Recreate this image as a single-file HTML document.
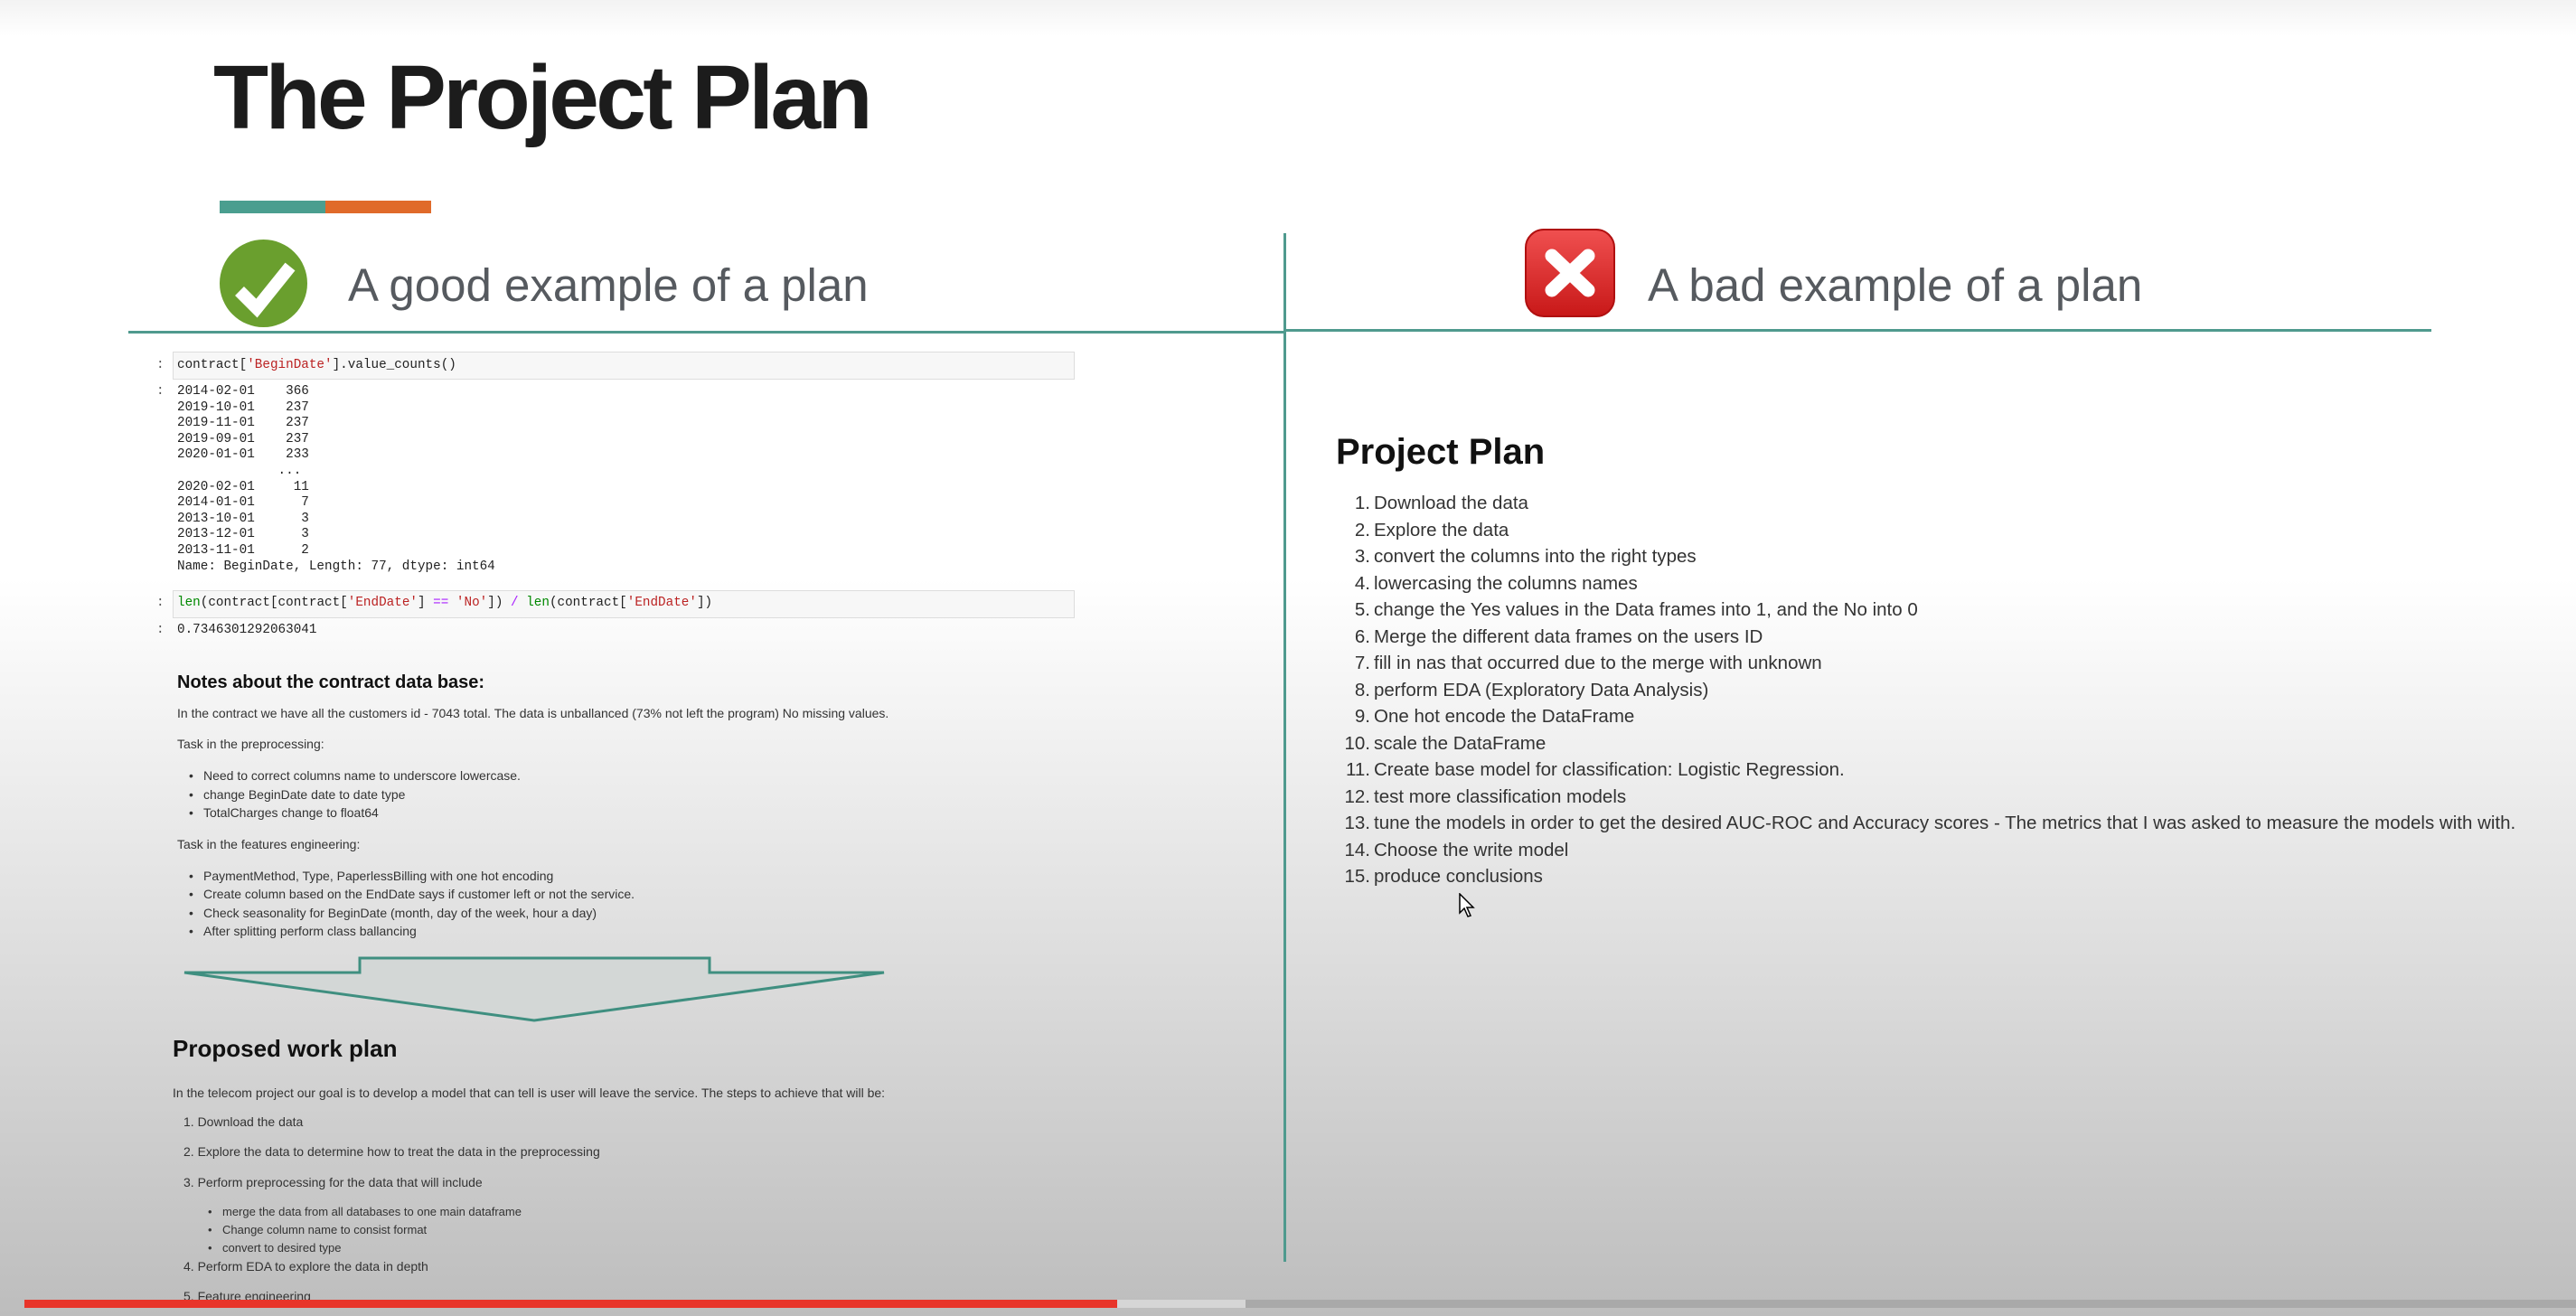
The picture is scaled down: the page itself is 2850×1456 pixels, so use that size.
<!DOCTYPE html>
<html><head><meta charset="utf-8"><style>
*{margin:0;padding:0;box-sizing:border-box}
body{width:2850px;height:1456px;overflow:hidden;position:relative;font-family:"Liberation Sans",sans-serif;
background:linear-gradient(#f3f3f3 0px,#fff 40px,#fff 640px,#e2e2e2 1000px,#bdbdbd 1456px);}
.a{position:absolute;white-space:nowrap}
.m{font-family:"Liberation Mono",monospace;font-size:14.3px;color:#222;line-height:17.6px}
.s{font-size:14px;color:#333}
.r{color:#b22}
.g{color:#080}
.p{color:#a2f}
.li{position:absolute;left:1478px;width:38px;text-align:right;font-size:20.5px;color:#333}
.lt{position:absolute;left:1520px;font-size:20.5px;color:#333;white-space:nowrap}
.b::before{content:"•";position:absolute;left:-16px}
</style></head><body>
<div class="a" style="left:236px;top:48px;font-size:100px;font-weight:bold;letter-spacing:-3.6px;color:#1c1c1c;line-height:120px">The Project Plan</div>
<div class="a" style="left:243px;top:222px;width:117px;height:14px;background:#4a9e8f"></div>
<div class="a" style="left:360px;top:222px;width:117px;height:14px;background:#e06a2a"></div>

<div class="a" style="left:1420px;top:258px;width:3px;height:1138px;background:#4f9a8e"></div>
<div class="a" style="left:142px;top:366px;width:1280px;height:3px;background:#4f9a8e"></div>
<div class="a" style="left:1421px;top:364px;width:1269px;height:3px;background:#4f9a8e"></div>

<svg class="a" style="left:243px;top:265px" width="97" height="97" viewBox="0 0 97 97"><circle cx="48.5" cy="48.5" r="48.5" fill="#6a9f2e"/><path d="M22 57 L41 76 L78 30" stroke="#fff" stroke-width="14" fill="none" stroke-linejoin="miter"/></svg>
<div class="a" style="left:385px;top:286px;font-size:51px;color:#565a5f;line-height:60px">A good example of a plan</div>

<svg class="a" style="left:1687px;top:253px" width="100" height="98" viewBox="0 0 100 98"><defs><linearGradient id="rg" x1="0" y1="0" x2="0" y2="1"><stop offset="0" stop-color="#f05050"/><stop offset="1" stop-color="#c81818"/></linearGradient></defs><rect x="1" y="1" width="98" height="96" rx="20" fill="url(#rg)" stroke="#b01010" stroke-width="2"/><path d="M30 30 L70 68 M70 30 L30 68" stroke="#fff" stroke-width="15" stroke-linecap="round"/></svg>
<div class="a" style="left:1823px;top:286px;font-size:51px;color:#565a5f;line-height:60px">A bad example of a plan</div>

<!-- left notebook -->
<div class="a" style="left:191px;top:389px;width:998px;height:31px;background:#f7f7f7;border:1px solid #ddd"></div>
<div class="a m" style="left:173px;top:396px;color:#555">:</div>
<div class="a m" style="left:196px;top:396px">contract[<span class="r">'BeginDate'</span>].value_counts()</div>
<div class="a m" style="left:173px;top:425px;color:#555">:</div>
<pre class="m" style="position:absolute;left:196px;top:425px;white-space:pre">2014-02-01    366
2019-10-01    237
2019-11-01    237
2019-09-01    237
2020-01-01    233
             ...
2020-02-01     11
2014-01-01      7
2013-10-01      3
2013-12-01      3
2013-11-01      2
Name: BeginDate, Length: 77, dtype: int64</pre>
<div class="a" style="left:191px;top:653px;width:998px;height:31px;background:#f7f7f7;border:1px solid #ddd"></div>
<div class="a m" style="left:173px;top:659px;color:#555">:</div>
<div class="a m" style="left:196px;top:659px"><span class="g">len</span>(contract[contract[<span class="r">'EndDate'</span>] <span class="p">==</span> <span class="r">'No'</span>]) <span class="p">/</span> <span class="g">len</span>(contract[<span class="r">'EndDate'</span>])</div>
<div class="a m" style="left:173px;top:689px;color:#555">:</div>
<div class="a m" style="left:196px;top:689px">0.7346301292063041</div>

<div class="a" style="left:196px;top:744px;font-size:20px;font-weight:bold;color:#111">Notes about the contract data base:</div>
<div class="a s" style="left:196px;top:781px">In the contract we have all the customers id - 7043 total. The data is unballanced (73% not left the program) No missing values.</div>
<div class="a s" style="left:196px;top:815px">Task in the preprocessing:</div>
<div class="a s b" style="left:225px;top:850px">Need to correct columns name to underscore lowercase.</div>
<div class="a s b" style="left:225px;top:871px">change BeginDate date to date type</div>
<div class="a s b" style="left:225px;top:891px">TotalCharges change to float64</div>
<div class="a s" style="left:196px;top:926px">Task in the features engineering:</div>
<div class="a s b" style="left:225px;top:961px">PaymentMethod, Type, PaperlessBilling with one hot encoding</div>
<div class="a s b" style="left:225px;top:981px">Create column based on the EndDate says if customer left or not the service.</div>
<div class="a s b" style="left:225px;top:1002px">Check seasonality for BeginDate (month, day of the week, hour a day)</div>
<div class="a s b" style="left:225px;top:1022px">After splitting perform class ballancing</div>

<svg class="a" style="left:0;top:0" width="1100" height="1200"><polygon points="398,1060 785,1060 785,1076 978,1076 591,1129 204,1076 398,1076" fill="#d3d7d6" stroke="#3f8f80" stroke-width="3"/></svg>

<div class="a" style="left:191px;top:1145px;font-size:26px;font-weight:bold;color:#111">Proposed work plan</div>
<div class="a s" style="left:191px;top:1201px">In the telecom project our goal is to develop a model that can tell is user will leave the service. The steps to achieve that will be:</div>
<div class="a s" style="left:203px;top:1233px">1. Download the data</div>
<div class="a s" style="left:203px;top:1266px">2. Explore the data to determine how to treat the data in the preprocessing</div>
<div class="a s" style="left:203px;top:1300px">3. Perform preprocessing for the data that will include</div>
<div class="a s b" style="left:246px;top:1333px;font-size:13px">merge the data from all databases to one main dataframe</div>
<div class="a s b" style="left:246px;top:1353px;font-size:13px">Change column name to consist format</div>
<div class="a s b" style="left:246px;top:1373px;font-size:13px">convert to desired type</div>
<div class="a s" style="left:203px;top:1393px">4. Perform EDA to explore the data in depth</div>
<div class="a s" style="left:203px;top:1426px">5. Feature engineering</div>

<!-- right -->
<div class="a" style="left:1478px;top:478px;font-size:40px;font-weight:bold;color:#111">Project Plan</div>
<div style="position:absolute;left:0;top:545px">
<div class="li" style="top:0">1.</div><div class="lt" style="top:0">Download the data</div>
<div class="li" style="top:29.5px">2.</div><div class="lt" style="top:29.5px">Explore the data</div>
<div class="li" style="top:59px">3.</div><div class="lt" style="top:59px">convert the columns into the right types</div>
<div class="li" style="top:88.5px">4.</div><div class="lt" style="top:88.5px">lowercasing the columns names</div>
<div class="li" style="top:118px">5.</div><div class="lt" style="top:118px">change the Yes values in the Data frames into 1, and the No into 0</div>
<div class="li" style="top:147.5px">6.</div><div class="lt" style="top:147.5px">Merge the different data frames on the users ID</div>
<div class="li" style="top:177px">7.</div><div class="lt" style="top:177px">fill in nas that occurred due to the merge with unknown</div>
<div class="li" style="top:206.5px">8.</div><div class="lt" style="top:206.5px">perform EDA (Exploratory Data Analysis)</div>
<div class="li" style="top:236px">9.</div><div class="lt" style="top:236px">One hot encode the DataFrame</div>
<div class="li" style="top:265.5px">10.</div><div class="lt" style="top:265.5px">scale the DataFrame</div>
<div class="li" style="top:295px">11.</div><div class="lt" style="top:295px">Create base model for classification: Logistic Regression.</div>
<div class="li" style="top:324.5px">12.</div><div class="lt" style="top:324.5px">test more classification models</div>
<div class="li" style="top:354px">13.</div><div class="lt" style="top:354px">tune the models in order to get the desired AUC-ROC and Accuracy scores - The metrics that I was asked to measure the models with with.</div>
<div class="li" style="top:383.5px">14.</div><div class="lt" style="top:383.5px">Choose the write model</div>
<div class="li" style="top:413px">15.</div><div class="lt" style="top:413px">produce conclusions</div>
</div>
<svg class="a" style="left:1614px;top:988px" width="20" height="28" viewBox="0 0 20 28"><path d="M1 1 L1 22 L6 17 L10 26 L13 25 L9 16 L16 16 Z" fill="#fff" stroke="#000" stroke-width="1.5"/></svg>

<!-- progress bar -->
<div class="a" style="left:27px;top:1438px;width:2823px;height:9px;background:#a9a9a9"></div>
<div class="a" style="left:1236px;top:1438px;width:142px;height:9px;background:#d6d6d6"></div>
<div class="a" style="left:27px;top:1438px;width:1209px;height:9px;background:#e8352a"></div>
</body></html>
